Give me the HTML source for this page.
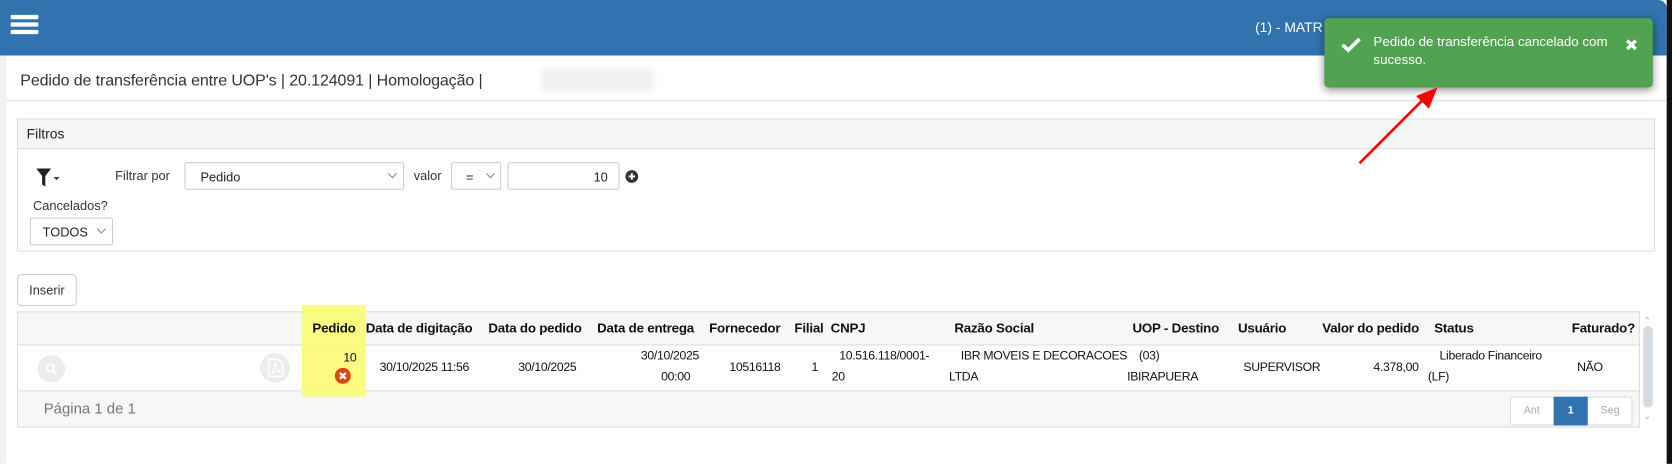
<!DOCTYPE html>
<html><head><meta charset="utf-8"><style>
*{box-sizing:border-box;margin:0;padding:0}
html,body{width:1672px;height:464px;overflow:hidden;background:#fff;font-family:"Liberation Sans",sans-serif;color:#222}
#w{position:absolute;left:0;top:0;width:1568px;height:435px;transform:scale(1.06633);transform-origin:0 0}
.a{position:absolute;white-space:nowrap}
.hd{font-weight:bold;font-size:12.5px;color:#111;letter-spacing:-0.2px}
.td{font-size:11.5px;color:#111;letter-spacing:-0.3px}
.sel{position:absolute;border:1px solid #ccc;background:#fff;font-size:12px;border-radius:2px}
.chev{position:absolute;width:6px;height:6px;border-right:1px solid #888;border-bottom:1px solid #888;transform:rotate(45deg)}
</style></head><body><div id="w">
<div class="a" style="left:0;top:0;width:6px;height:435px;background:#f2f2f2"></div>
<div class="a" style="left:0;top:0;width:1563px;height:52px;background:#3173ae;border-top-right-radius:8px"></div>
<div class="a" style="left:1563px;top:0;width:5px;height:435px;background:#111"></div>
<div class="a" style="left:10px;top:14px;width:26px;height:4px;background:#fff;border-radius:1px"></div>
<div class="a" style="left:10px;top:21px;width:26px;height:4px;background:#fff;border-radius:1px"></div>
<div class="a" style="left:10px;top:28px;width:26px;height:4px;background:#fff;border-radius:1px"></div>
<div class="a" style="left:1177px;top:18px;color:#fff;font-size:13px">(1) - MATR</div>
<div class="a" style="left:19px;top:67px;font-size:15px;color:#333;letter-spacing:-0.1px">Pedido de transferência entre UOP's | 20.124091 | Homologação |</div>
<div class="a" style="left:508px;top:64px;width:105px;height:22px;background:#f0f0f0;filter:blur(3px)"></div>
<div class="a" style="left:6px;top:94px;width:1557px;height:1px;background:#ddd"></div>
<div class="a" style="left:16px;top:111px;width:1536px;height:125px;border:1px solid #ddd"></div>
<div class="a" style="left:17px;top:112px;width:1534px;height:28px;background:#f5f5f5;border-bottom:1px solid #ddd"></div>
<div class="a" style="left:25px;top:118px;font-size:13px;color:#222">Filtros</div>
<svg class="a" style="left:34px;top:158px" width="24" height="18" viewBox="0 0 24 18"><path d="M0 0H14L8.5 7V17L5.5 15V7Z" fill="#222"/><path d="M16 8H22L19 11Z" fill="#444"/></svg>
<div class="a" style="left:108px;top:158px;font-size:12px;color:#333">Filtrar por</div>
<div class="sel" style="left:173px;top:152px;width:206px;height:26px"><span class="a" style="left:14px;top:6px">Pedido</span><span class="chev" style="left:191px;top:7px"></span></div>
<div class="a" style="left:388px;top:158px;font-size:12px;color:#333">valor</div>
<div class="sel" style="left:423px;top:152px;width:47px;height:26px"><span class="a" style="left:13px;top:6px">=</span><span class="chev" style="left:33px;top:7px"></span></div>
<div class="sel" style="left:476px;top:152px;width:105px;height:26px"><span class="a" style="right:10px;top:6px">10</span></div>
<svg class="a" style="left:586px;top:159px" width="13" height="13"><circle cx="6.5" cy="6.5" r="6" fill="#333"/><path d="M3.5 6.5H9.5M6.5 3.5V9.5" stroke="#fff" stroke-width="1.8"/></svg>
<div class="a" style="left:31px;top:186px;font-size:12px;color:#333">Cancelados?</div>
<div class="sel" style="left:28px;top:204px;width:78px;height:26px"><span class="a" style="left:11px;top:6px">TODOS</span><span class="chev" style="left:63px;top:7px"></span></div>
<div class="a" style="left:16px;top:257px;width:56px;height:30px;border:1px solid #ccc;border-radius:4px;background:#fff;font-size:12px;color:#333;text-align:center;line-height:28px">Inserir</div>
<div class="a" style="left:16px;top:292px;width:1522px;height:109px;border:1px solid #ddd;background:#f7f7f7"></div>
<div class="a" style="left:17px;top:323px;width:1520px;height:44px;background:#fff;border-top:1px solid #ddd;border-bottom:1px solid #ddd"></div>
<div class="a" style="left:283px;top:286px;width:60px;height:86px;background:#fbfb7a;opacity:.95"></div>
<div class="a hd" style="left:293px;top:301px">Pedido</div>
<div class="a hd" style="left:343px;top:301px">Data de digitação</div>
<div class="a hd" style="left:458px;top:301px">Data do pedido</div>
<div class="a hd" style="left:560px;top:301px">Data de entrega</div>
<div class="a hd" style="left:665px;top:301px">Fornecedor</div>
<div class="a hd" style="left:745px;top:301px">Filial</div>
<div class="a hd" style="left:779px;top:301px">CNPJ</div>
<div class="a hd" style="left:895px;top:301px">Razão Social</div>
<div class="a hd" style="left:1062px;top:301px">UOP - Destino</div>
<div class="a hd" style="left:1161px;top:301px">Usuário</div>
<div class="a hd" style="left:1240px;top:301px">Valor do pedido</div>
<div class="a hd" style="left:1345px;top:301px">Status</div>
<div class="a hd" style="left:1474px;top:301px">Faturado?</div>
<svg class="a" style="left:35px;top:333px" width="26" height="26"><circle cx="13" cy="13" r="13" fill="#ececec"/><circle cx="12" cy="12" r="3.5" fill="none" stroke="#fff" stroke-width="2"/><path d="M14.5 14.5L18 18" stroke="#fff" stroke-width="2.2"/></svg>
<svg class="a" style="left:244px;top:331px" width="28" height="28"><circle cx="14" cy="14" r="14" fill="#ececec"/><path d="M8 6H17L21 10V22H8Z" fill="none" stroke="#fff" stroke-width="1.6"/><path d="M11 19C13 14 14 12 14 9C15 13 16 16 19 18C15 17 13 18 11 19Z" fill="none" stroke="#fff" stroke-width="1.2"/></svg>
<div class="a td" style="left:322px;top:330px">10</div>
<svg class="a" style="left:314px;top:345px" width="15" height="15"><circle cx="7.5" cy="7.5" r="7.5" fill="#d9480f"/><path d="M4.8 4.8L10.2 10.2M10.2 4.8L4.8 10.2" stroke="#fff" stroke-width="2.2"/></svg>
<div class="a td" style="left:356px;top:339px">30/10/2025 11:56</div>
<div class="a td" style="left:486px;top:339px">30/10/2025</div>
<div class="a td" style="left:601px;top:328px">30/10/2025</div>
<div class="a td" style="left:620px;top:348px">00:00</div>
<div class="a td" style="left:684px;top:339px">10516118</div>
<div class="a td" style="left:761px;top:339px">1</div>
<div class="a td" style="left:787px;top:328px">10.516.118/0001-</div>
<div class="a td" style="left:780px;top:348px">20</div>
<div class="a td" style="left:901px;top:328px">IBR MOVEIS E DECORACOES</div>
<div class="a td" style="left:890px;top:348px">LTDA</div>
<div class="a td" style="left:1068px;top:328px">(03)</div>
<div class="a td" style="left:1057px;top:348px">IBIRAPUERA</div>
<div class="a td" style="left:1166px;top:339px">SUPERVISOR</div>
<div class="a td" style="left:1288px;top:339px">4.378,00</div>
<div class="a td" style="left:1350px;top:328px">Liberado Financeiro</div>
<div class="a td" style="left:1339px;top:348px">(LF)</div>
<div class="a td" style="left:1479px;top:339px">NÃO</div>
<div class="a" style="left:41px;top:375px;font-size:14px;color:#777">Página 1 de 1</div>
<div class="a" style="left:1416px;top:372px;width:115px;height:27px;border:1px solid #ddd;border-radius:3px;background:#fff"></div>
<div class="a" style="left:1457px;top:372px;width:32px;height:27px;background:#3173ae;color:#fff;font-size:10px;font-weight:bold;text-align:center;line-height:27px">1</div>
<div class="a" style="left:1416px;top:372px;width:41px;line-height:27px;text-align:center;font-size:10px;color:#aaa">Ant</div>
<div class="a" style="left:1489px;top:372px;width:42px;line-height:27px;text-align:center;font-size:10px;color:#aaa">Seg</div>
<div class="a" style="left:1541px;top:296px;font-size:9px;color:#aaa">&#8963;</div>
<div class="a" style="left:1541px;top:306px;width:9px;height:76px;background:#d3dbe3;border-radius:4px"></div>
<div class="a" style="left:1541px;top:385px;font-size:9px;color:#aaa">&#8964;</div>
<div class="a" style="left:1242px;top:17px;width:308px;height:65px;background:#51a351;border-radius:4px;box-shadow:0 2px 8px rgba(0,0,0,.45)"></div>
<svg class="a" style="left:1257px;top:34px" width="20" height="16"><path d="M2 8L7.5 13L18 2.5" fill="none" stroke="#fff" stroke-width="3.4"/></svg>
<div class="a" style="left:1288px;top:31px;color:#fff;font-size:12.5px;line-height:17px;white-space:normal;width:220px">Pedido de transferência cancelado com sucesso.</div>
<svg class="a" style="left:1524px;top:36px" width="12" height="12"><path d="M2 2L10 10M10 2L2 10" stroke="#fff" stroke-width="3.2"/></svg>
<svg class="a" style="left:1260px;top:70px" width="100" height="90"><path d="M15 83L80 18" stroke="#f00" stroke-width="2.5"/><path d="M88 12L68 20L80 32Z" fill="#f00"/></svg>
</div></body></html>
